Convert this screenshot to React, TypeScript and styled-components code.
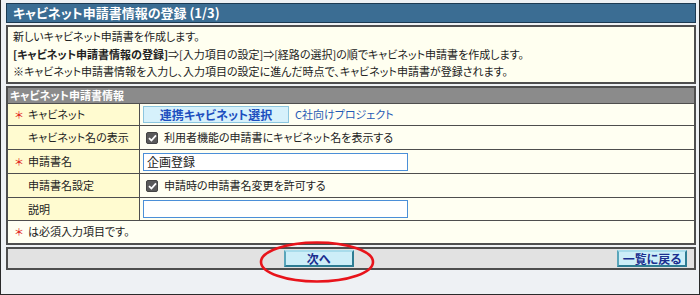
import styled, { createGlobalStyle } from 'styled-components';

const GlobalStyle = createGlobalStyle`
  html, body {
    margin: 0;
    padding: 0;
    background: #eef1f4;
  }
  body {
    font-family: "Noto Sans CJK JP", "Liberation Sans", sans-serif;
    font-size: 11px;
    color: #222;
    font-feature-settings: "palt";
  }
`;

const Page = styled.div`
  position: relative;
  box-sizing: border-box;
  width: 700px;
  height: 295px;
  padding: 3px 3px 0 5px;
  border: 1px solid #2a2a2a;
  border-top: none;
  background: #eef1f4;
  display: flex;
  flex-direction: column;
  gap: 2px;
`;

const TitleBar = styled.h1`
  margin: 0;
  box-sizing: border-box;
  height: 20px;
  padding: 0 6px;
  background: #3b6d93;
  border: 1px solid #1c3a52;
  color: #fff;
  font-size: 13px;
  font-weight: bold;
  line-height: 18px;
`;

const IntroBox = styled.div`
  box-sizing: border-box;
  height: 59px;
  padding: 1px 5px;
  background: #fffff0;
  border: 2px solid #4e4e4e;
  line-height: 17.5px;
`;

const Strong = styled.b`
  color: #222;
`;

const Table = styled.table`
  width: 100%;
  border-collapse: collapse;
  border: 2px solid #4e4e4e;
  line-height: 15px;
`;

const SectionHeader = styled.th`
  height: 14px;
  padding: 0 2px;
  background: #8b8b8b;
  color: #fff;
  font-weight: bold;
  text-align: left;
  border-bottom: 1px solid #4e4e4e;
`;

const Row = styled.tr<{ $h: number }>`
  height: ${(p) => p.$h}px;
`;

const LabelCell = styled.td`
  width: 124px;
  padding: 0 0 0 7px;
  background: #fffbd0;
  border: 1px solid #4e4e4e;
  border-left: none;
  white-space: nowrap;
`;

const ValueCell = styled.td`
  padding: 0 3px;
  background: #fffff2;
  border: 1px solid #4e4e4e;
  border-right: none;
`;

const NoteCell = styled.td`
  padding: 0 0 0 7px;
  background: #fffff2;
  border-top: 1px solid #4e4e4e;
`;

const Mark = styled.span<{ $on?: boolean }>`
  display: inline-block;
  width: 13px;
  color: #e01010;
  font-size: 10px;
  visibility: ${(p) => (p.$on ? 'visible' : 'hidden')};
`;

const PickButton = styled.button`
  box-sizing: border-box;
  width: 146px;
  height: 17px;
  padding: 0;
  vertical-align: middle;
  background: #d6f1fb;
  border: 1px solid #8cc6df;
  color: #1d4fbf;
  font-family: inherit;
  font-feature-settings: inherit;
  font-size: 12px;
  font-weight: bold;
  line-height: 15px;
`;

const LinkText = styled.span`
  margin-left: 6px;
  color: #1f5bb5;
  vertical-align: middle;
`;

const CheckLine = styled.label`
  display: flex;
  align-items: center;
  gap: 6px;
  padding-left: 3px;
`;

const CheckBox = styled.span`
  display: inline-flex;
  align-items: center;
  justify-content: center;
  width: 12px;
  height: 12px;
  border-radius: 2px;
  background: #5a5a5a;
  border: 1px solid #444;
  box-sizing: border-box;
`;

const TextInput = styled.input`
  box-sizing: border-box;
  width: 265px;
  height: 18px;
  padding: 0 3px;
  margin: 0;
  border: 1px solid #4b8fd8;
  background: #fff;
  font-family: inherit;
  font-size: 12px;
  color: #222;
  vertical-align: middle;
`;

const ButtonBar = styled.div`
  box-sizing: border-box;
  height: 23px;
  display: grid;
  grid-template-columns: 1fr auto;
  align-items: center;
  padding: 0 7px 0 12px;
  background: #e2e2e2;
  border: 2px solid #4e4e4e;
`;

const Centered = styled.div`
  display: flex;
  justify-content: center;
`;

const BarButton = styled.button`
  box-sizing: border-box;
  width: 70px;
  height: 17px;
  padding: 0;
  background: #cdeef8;
  border: 2px solid;
  border-color: #a9dceb #2d7c93 #2d7c93 #5aa5ba;
  color: #1b2f8f;
  font-family: inherit;
  font-feature-settings: inherit;
  font-size: 12px;
  font-weight: bold;
  line-height: 13px;
`;

const Annotation = styled.svg`
  position: absolute;
  left: 257px;
  top: 240px;
  pointer-events: none;
`;

const Check = () => (
  <CheckBox>
    <svg width="9" height="8" viewBox="0 0 9 8">
      <path d="M1 4.2 L3.4 6.5 L8 1.3" fill="none" stroke="#fff" strokeWidth="1.8" />
    </svg>
  </CheckBox>
);

export default function App() {
  return (
    <>
      <GlobalStyle />
      <Page>
        <TitleBar>キャビネット申請書情報の登録 (1/3)</TitleBar>
        <IntroBox>
          <div>新しいキャビネット申請書を作成します。</div>
          <div>
            <Strong>[キャビネット申請書情報の登録]</Strong>⇒[入力項目の設定]⇒[経路の選択]の順でキャビネット申請書を作成します。
          </div>
          <div>※キャビネット申請書情報を入力し、入力項目の設定に進んだ時点で、キャビネット申請書が登録されます。</div>
        </IntroBox>
        <Table>
          <thead>
            <tr>
              <SectionHeader colSpan={2}>キャビネット申請書情報</SectionHeader>
            </tr>
          </thead>
          <tbody>
            <Row $h={22}>
              <LabelCell><Mark $on>＊</Mark>キャビネット</LabelCell>
              <ValueCell>
                <PickButton>連携キャビネット選択</PickButton>
                <LinkText>C社向けプロジェクト</LinkText>
              </ValueCell>
            </Row>
            <Row $h={24}>
              <LabelCell><Mark />キャビネット名の表示</LabelCell>
              <ValueCell>
                <CheckLine><Check />利用者機能の申請書にキャビネット名を表示する</CheckLine>
              </ValueCell>
            </Row>
            <Row $h={24}>
              <LabelCell><Mark $on>＊</Mark>申請書名</LabelCell>
              <ValueCell>
                <TextInput defaultValue="企画登録" />
              </ValueCell>
            </Row>
            <Row $h={24}>
              <LabelCell><Mark />申請書名設定</LabelCell>
              <ValueCell>
                <CheckLine><Check />申請時の申請書名変更を許可する</CheckLine>
              </ValueCell>
            </Row>
            <Row $h={23}>
              <LabelCell><Mark />説明</LabelCell>
              <ValueCell>
                <TextInput defaultValue="" />
              </ValueCell>
            </Row>
            <Row $h={23}>
              <NoteCell colSpan={2}><Mark $on>＊</Mark>は必須入力項目です。</NoteCell>
            </Row>
          </tbody>
        </Table>
        <ButtonBar>
          <Centered>
            <BarButton>次へ</BarButton>
          </Centered>
          <BarButton>一覧に戻る</BarButton>
        </ButtonBar>
        <Annotation width="118" height="44" viewBox="0 0 118 44">
          <ellipse cx="59" cy="22" rx="56" ry="19.5" fill="none" stroke="#e8141b" strokeWidth="2.6" />
        </Annotation>
      </Page>
    </>
  );
}
